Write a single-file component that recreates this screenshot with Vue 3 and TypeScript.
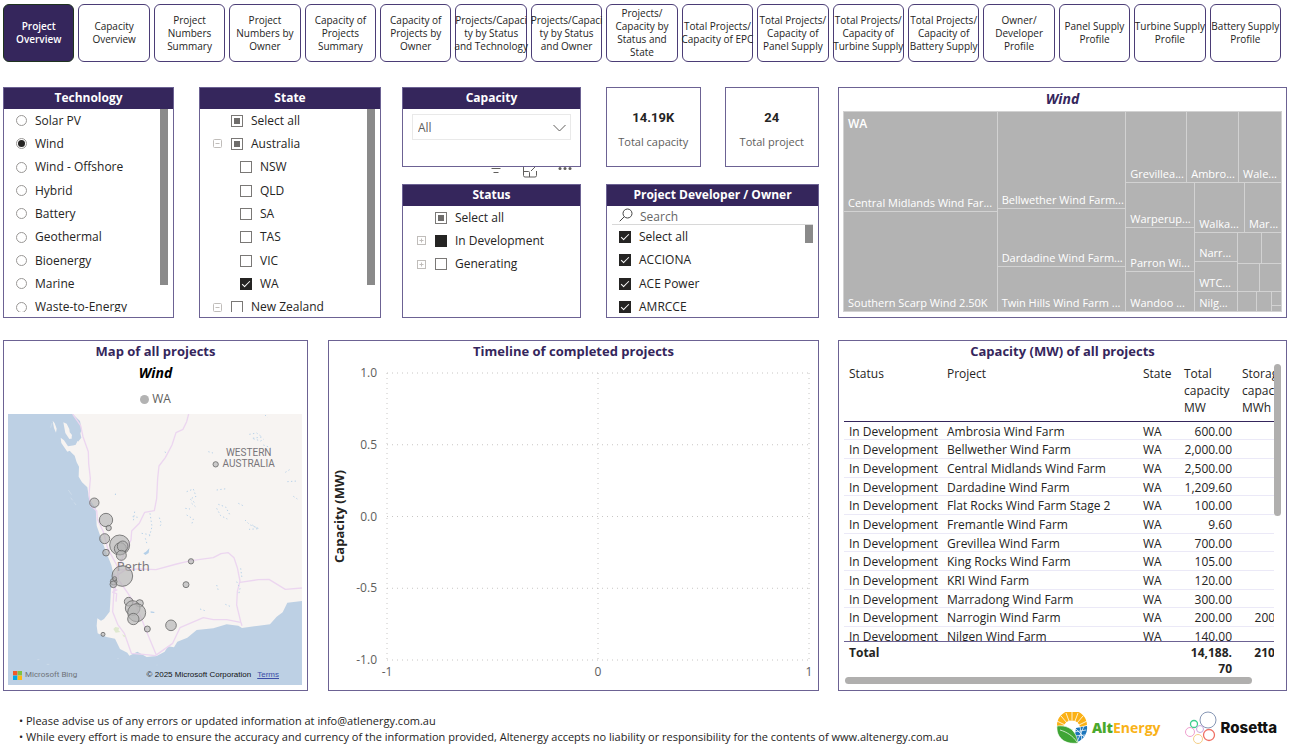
<script setup lang="ts">
import { ref } from 'vue'

const tabs: string[] = [
  'Project\nOverview',
  'Capacity\nOverview',
  'Project\nNumbers\nSummary',
  'Project\nNumbers by\nOwner',
  'Capacity of\nProjects\nSummary',
  'Capacity of\nProjects by\nOwner',
  'Projects/Capaci\nty by Status\nand Technology',
  'Projects/Capaci\nty by Status\nand Owner',
  'Projects/\nCapacity by\nStatus and\nState',
  'Total Projects/\nCapacity of EPC',
  'Total Projects/\nCapacity of\nPanel Supply',
  'Total Projects/\nCapacity of\nTurbine Supply',
  'Total Projects/\nCapacity of\nBattery Supply',
  'Owner/\nDeveloper\nProfile',
  'Panel Supply\nProfile',
  'Turbine Supply\nProfile',
  'Battery Supply\nProfile',
]
const activeTab = ref(0)

const technologies = ['Solar PV', 'Wind', 'Wind - Offshore', 'Hybrid', 'Battery', 'Geothermal', 'Bioenergy', 'Marine', 'Waste-to-Energy']
const technology = ref('Wind')

interface TreeRow {
  label: string
  level: number
  mark: 'none' | 'check' | 'some' | 'full'
  toggle?: 'minus' | 'plus'
}
const states: TreeRow[] = [
  { label: 'Select all', level: 0, mark: 'some' },
  { label: 'Australia', level: 0, mark: 'some', toggle: 'minus' },
  { label: 'NSW', level: 1, mark: 'none' },
  { label: 'QLD', level: 1, mark: 'none' },
  { label: 'SA', level: 1, mark: 'none' },
  { label: 'TAS', level: 1, mark: 'none' },
  { label: 'VIC', level: 1, mark: 'none' },
  { label: 'WA', level: 1, mark: 'check' },
  { label: 'New Zealand', level: 0, mark: 'none', toggle: 'minus' },
]
const statuses: TreeRow[] = [
  { label: 'Select all', level: 0, mark: 'some' },
  { label: 'In Development', level: 0, mark: 'full', toggle: 'plus' },
  { label: 'Generating', level: 0, mark: 'none', toggle: 'plus' },
]
const owners = ['Select all', 'ACCIONA', 'ACE Power', 'AMRCCE']

const kpis = [
  { value: '14.19K', label: 'Total capacity' },
  { value: '24', label: 'Total project' },
]

/* Treemap leaves: [label, x0, y0, x1, y1]; the edges become grid lines. */
type Leaf = [string, number, number, number, number]
const leaves: Leaf[] = [
  ['Central Midlands Wind Far...', 0, 0, 154, 100],
  ['Southern Scarp Wind 2.50K', 0, 100, 154, 200],
  ['Bellwether Wind Farm...', 154, 0, 283, 97],
  ['Dardadine Wind Farm...', 154, 97, 283, 155],
  ['Twin Hills Wind Farm ...', 154, 155, 283, 200],
  ['Grevillea...', 283, 0, 344, 71],
  ['Ambro...', 344, 0, 396, 71],
  ['Wale...', 396, 0, 439, 71],
  ['Warperup...', 283, 71, 352, 116],
  ['Parron Wi...', 283, 116, 352, 160],
  ['Wandoo ...', 283, 160, 352, 200],
  ['Walka...', 352, 71, 402, 121],
  ['Mar...', 402, 71, 439, 121],
  ['Narr...', 352, 121, 395, 150],
  ['WTC...', 352, 150, 395, 180],
  ['Nilg...', 352, 180, 395, 200],
  ['', 395, 121, 419, 152],
  ['', 419, 121, 439, 152],
  ['', 395, 152, 417, 180],
  ['', 417, 152, 439, 180],
  ['', 395, 180, 414, 200],
  ['', 414, 180, 429, 200],
  ['', 429, 180, 439, 194],
  ['', 429, 194, 439, 200],
]
const edges = (values: number[]) => [...new Set(values)].sort((a, b) => a - b)
const xs = edges(leaves.flatMap((l) => [l[1], l[3]]))
const ys = edges(leaves.flatMap((l) => [l[2], l[4]]))
const tracks = (e: number[]) => e.slice(1).map((v, i) => `minmax(0, ${v - e[i]}fr)`).join(' ')
const treemapStyle = { gridTemplateColumns: tracks(xs), gridTemplateRows: tracks(ys) }
const leafStyle = (l: Leaf) => ({
  gridColumn: `${xs.indexOf(l[1]) + 1} / ${xs.indexOf(l[3]) + 1}`,
  gridRow: `${ys.indexOf(l[2]) + 1} / ${ys.indexOf(l[4]) + 1}`,
})

/* Project bubbles: [cx, cy, r] in map units. */
const bubbles: [number, number, number][] = [
  [283, 503, 14], [318, 555, 20], [326, 579, 8], [314, 611, 15], [318, 653, 10],
  [359, 630, 30], [361, 641, 18], [368, 634, 16], [364, 661, 15], [367, 723, 31],
  [341, 740, 10], [340, 748, 10], [344, 731, 6], [573, 679, 8], [558, 749, 9], [386, 800, 13],
  [419, 805, 11], [398, 819, 22], [410, 833, 27], [400, 852, 17], [442, 882, 9],
  [513, 871, 16], [309, 898, 6], [647, 388, 8],
]
/* Salt lakes, drawn as dotted strokes. */
const lakes = [
  'M748 298l22-4 16 12-30 4 26 8 10 -6', 'M790 330l22 8', 'M856 412l16-10M862 440l30-2M880 484l12 8',
  'M560 470l20-8 8 22-18 8 18 14M575 505l16 14M556 520l14 2', 'M650 520l12 22 20 10M655 508l22 8 14 26',
  'M735 555l14 14 28 12-30 2M757 570l18 12', 'M715 505l16 8M650 465l30-4', 'M398 545l16 2M404 530l-4 28M450 535l6 40-8 30',
  'M478 548l6 18-6 12M425 595l24 4M436 610l6 20', 'M710 740l10 20-4 18M722 700l4 30', 'M650 750l6 20M600 822l18 6M676 808l14 6',
  'M560 540l20 12-6 20', 'M495 350l4 8M625 350l14 4M795 240l8 8',
]

const rows: [string, string, string][] = [
  ['Ambrosia Wind Farm', '600.00', ''],
  ['Bellwether Wind Farm', '2,000.00', ''],
  ['Central Midlands Wind Farm', '2,500.00', ''],
  ['Dardadine Wind Farm', '1,209.60', ''],
  ['Flat Rocks Wind Farm Stage 2', '100.00', ''],
  ['Fremantle Wind Farm', '9.60', ''],
  ['Grevillea Wind Farm', '700.00', ''],
  ['King Rocks Wind Farm', '105.00', ''],
  ['KRI Wind Farm', '120.00', ''],
  ['Marradong Wind Farm', '300.00', ''],
  ['Narrogin Wind Farm', '200.00', '200.00'],
  ['Nilgen Wind Farm', '140.00', ''],
]
const yTicks = ['1.0', '0.5', '0.0', '-0.5', '-1.0']
const xTicks = ['-1', '0', '1']
</script>

<template>
  <div class="page">
    <nav class="tabs" aria-label="Report pages">
      <button v-for="(tab, i) in tabs" :key="i" type="button" class="tab" :class="{ active: i === activeTab }" @click="activeTab = i">{{ tab }}</button>
    </nav>

    <main class="board">
      <div class="filters">
        <div class="pair">
          <section class="panel">
            <h2 class="bar">Technology</h2>
            <div class="scroller tall">
              <ul class="list nine">
                <li v-for="t in technologies" :key="t">
                  <label class="opt tech"><input v-model="technology" class="radio" type="radio" name="technology" :value="t" /><span>{{ t }}</span></label>
                </li>
              </ul>
              <span class="thumb long"></span>
            </div>
          </section>
          <section class="panel">
            <h2 class="bar">State</h2>
            <div class="scroller tall">
              <ul class="list nine">
                <li v-for="s in states" :key="s.label" class="node" :class="{ child: s.level === 1 }">
                  <button v-if="s.toggle" type="button" class="toggle" :aria-label="'Collapse ' + s.label">
                    <svg width="9" height="9" viewBox="0 0 9 9"><rect x=".5" y=".5" width="8" height="8" rx="1" /><path d="M2.500 4.500h4" /></svg>
                  </button>
                  <span v-else class="toggle"></span>
                  <label class="opt"><input class="check" :class="s.mark" type="checkbox" :checked="s.mark === 'check'" :indeterminate="s.mark === 'some'" /><span>{{ s.label }}</span></label>
                </li>
              </ul>
              <span class="thumb long"></span>
            </div>
          </section>
        </div>

        <div class="quad">
          <section class="panel top">
            <h2 class="bar">Capacity</h2>
            <div class="select-wrap">
              <select class="select" aria-label="Capacity">
                <option>All</option>
              </select>
              <svg class="chevron" width="13" height="8" viewBox="0 0 13 8"><path d="M.5 1l6 6 6-6" /></svg>
            </div>
          </section>

          <div class="kpis">
            <section v-for="k in kpis" :key="k.label" class="panel kpi">
              <strong>{{ k.value }}</strong>
              <span>{{ k.label }}</span>
            </section>
          </div>

          <section class="panel status">
            <div class="tools">
              <button type="button" aria-label="Filters"><svg width="12" height="11" viewBox="0 0 12 11"><path d="M1.500 1.500h9M3.500 5.500h5" /></svg></button>
              <button type="button" aria-label="Focus mode"><svg width="16" height="11" viewBox="0 0 16 11"><path d="M1.500 0v8.500a1.500 1.500 0 0 0 1.500 1.500h10a1.500 1.500 0 0 0 1.500-1.500V4M1.500 4.500h5a1 1 0 0 1 1 1V10M9 4l4-4" /></svg></button>
              <button type="button" aria-label="More options"><svg class="dots" width="14" height="11" viewBox="0 0 14 11"><circle cx="2" cy="1.500" r="1.500" /><circle cx="7" cy="1.500" r="1.500" /><circle cx="12" cy="1.500" r="1.500" /></svg></button>
            </div>
            <h2 class="bar">Status</h2>
            <ul class="list three">
              <li v-for="s in statuses" :key="s.label" class="node">
                <button v-if="s.toggle" type="button" class="toggle" :aria-label="'Expand ' + s.label">
                  <svg width="9" height="9" viewBox="0 0 9 9"><rect x=".5" y=".5" width="8" height="8" /><path d="M2.500 4.500h4M4.500 2.500v4" /></svg>
                </button>
                <span v-else class="toggle"></span>
                <label class="opt"><input class="check" :class="s.mark" type="checkbox" :checked="s.mark === 'full'" :indeterminate="s.mark === 'some'" /><span>{{ s.label }}</span></label>
              </li>
            </ul>
          </section>

          <section class="panel">
            <h2 class="bar">Project Developer / Owner</h2>
            <label class="search">
              <svg width="14" height="14" viewBox="0 0 14 14"><circle cx="8.500" cy="5.500" r="4.500" /><path d="M5.300 8.700L.7 13.300" /></svg>
              <input type="text" placeholder="Search" aria-label="Search owners" />
            </label>
            <div class="scroller short">
              <ul class="list four">
                <li v-for="o in owners" :key="o">
                  <label class="opt owner"><input class="check" type="checkbox" checked /><span>{{ o }}</span></label>
                </li>
              </ul>
              <span class="thumb small"></span>
            </div>
          </section>
        </div>
      </div>

      <section class="panel">
        <h2 class="heading italic">Wind</h2>
        <div class="treemap" :style="treemapStyle">
          <div v-for="(l, i) in leaves" :key="i" class="leaf" :style="leafStyle(l)">
            <span v-if="i === 0" class="group">WA</span>
            <span class="leaf-name">{{ l[0] }}</span>
          </div>
        </div>
      </section>

      <div class="visuals">
        <section class="panel column">
          <h2 class="heading">Map of all projects</h2>
          <h3 class="subtitle">Wind</h3>
          <p class="legend"><i></i>WA</p>
          <div class="map">
            <svg viewBox="24 237 882 813" preserveAspectRatio="xMidYMid slice">
              <rect x="24" y="237" width="882" height="813" fill="#bdd0e4" />
              <path
                class="land"
                d="M218 237L240 258 245 285 241 295 244 308 236 318 226 330 205 342 213 352 224 362 230 382 237 395 236 425 246 442 262 457 267 490 287 520 290 572 304 612 318 650 334 690 341 720 343 745 333 760 331 800 329 830 312 852 303 857 292 850 290 872 293 895 304 900 320 906 345 911 360 942 382 953 388 962 412 950 440 966 470 963 494 950 504 934 522 937 532 920 562 908 590 885 640 880 680 868 715 872 726 879 770 873 810 868 830 845 848 832 862 803 906 798V237z"
              />
              <path class="land" d="M158 257l6 8 6 16-2 12-6-14zM190 262l10 4 8 16 2 16 6 12-8 2-12-18zM182 308l10 8 12 18 24-4 4-12 6 6-6 14-30 12-18-26zM208 290l8 10-2 12-6-8z" />
              <g class="reef"><path d="M205 465l10 14M212 488l6 8M222 502l6 8M156 264l-4 14M112 974h6M140 988h8M352 970h4M470 990h2" /></g>
              <g class="road">
                <path d="M218 237L242 272 249 305 265 350 266 385 271 430 267 480 272 512 290 527 292 552 310 590 323 640 350 690 356 735 384 775 405 808 424 850 444 900 468 958" />
                <path d="M566 237L560 260 549 283 528 293 516 330 496 368 477 393 473 430 470 490 463 527 434 532 418 565 395 588 393 615 372 655 357 697" />
                <path d="M353 705L420 702 468 704 530 687 573 677 640 668 663 656 685 653 702 668 712 698 720 738 712 770 710 810 722 860 726 872" />
                <path d="M720 742L775 734 807 733 856 763 906 759" />
                <path d="M344 715L342 765 338 830 353 868 373 895 394 955 430 958 466 962 518 925 540 878 610 848 640 854 680 854 722 862" />
                <path d="M356 715L340 735 346 762 338 772 350 776 348 800M340 770l12-6M356 718l30-20" />
              </g>
              <g class="lakes"><path v-for="d in lakes" :key="d" :d="d" /></g>
              <path fill="#b4cfe8" d="M430 655l8-5 10-10-2 14-10 6zM452 829l12 2-2 3-10-1zM344 480l3-6 1 6z" />
              <path fill="#dfe9cf" d="M340 882l6-6 12 2-3 8 6 5-14 2zM366 898l12 5-6 4z" />
            </svg>
            <span class="place perth">Perth</span>
            <span class="place wa">WESTERN<br />AUSTRALIA</span>
            <svg viewBox="24 237 882 813" preserveAspectRatio="xMidYMid slice" class="bubbles">
              <circle v-for="(b, i) in bubbles" :key="i" :cx="b[0]" :cy="b[1]" :r="b[2]" />
            </svg>
            <div class="credits">
              <svg width="9" height="9" viewBox="0 0 9 9"><path fill="#f1592a" d="M0 0h4.400v4.400H0z" /><path fill="#80c342" d="M4.600 0H9v4.400H4.600z" /><path fill="#00a8e8" d="M0 4.600h4.400V9H0z" /><path fill="#fdb913" d="M4.600 4.600H9V9H4.600z" /></svg>
              <span class="bing">Microsoft Bing</span>
              <span class="copy">© 2025 Microsoft Corporation</span>
              <a href="#terms">Terms</a>
            </div>
          </div>
        </section>

        <section class="panel column">
          <h2 class="heading">Timeline of completed projects</h2>
          <div class="chart">
            <div class="axis-title"><span>Capacity (MW)</span></div>
            <div class="y-ticks"><span v-for="t in yTicks" :key="t">{{ t }}</span></div>
            <svg class="plot" width="100%" height="100%">
              <line v-for="(t, i) in yTicks" :key="t" x1="0" x2="100%" :y1="i * 25 + '%'" :y2="i * 25 + '%'" />
              <line v-for="(t, i) in xTicks" :key="'x' + t" y1="0" y2="100%" :x1="i * 50 + '%'" :x2="i * 50 + '%'" />
            </svg>
            <div class="x-ticks"><span v-for="t in xTicks" :key="t">{{ t }}</span></div>
          </div>
        </section>
      </div>

      <section class="panel column">
        <h2 class="heading">Capacity (MW) of all projects</h2>
        <div class="table-area">
          <div class="table-clip">
            <table>
              <thead>
                <tr>
                  <th scope="col">Status</th>
                  <th scope="col">Project</th>
                  <th scope="col">State</th>
                  <th scope="col">Total capacity MW</th>
                  <th scope="col">Storage capacity MWh</th>
                </tr>
              </thead>
              <tbody>
                <tr v-for="r in rows" :key="r[0]">
                  <td>In Development</td>
                  <td>{{ r[0] }}</td>
                  <td>WA</td>
                  <td class="num">{{ r[1] }}</td>
                  <td class="num">{{ r[2] }}</td>
                </tr>
              </tbody>
              <tfoot>
                <tr>
                  <td>Total</td>
                  <td></td>
                  <td></td>
                  <td class="num">14,188.<wbr />70</td>
                  <td class="num">210.00</td>
                </tr>
              </tfoot>
            </table>
          </div>
          <span class="vbar"></span>
        </div>
        <span class="hbar"></span>
      </section>
    </main>

    <footer class="foot">
      <ul>
        <li>• Please advise us of any errors or updated information at info@atlenergy.com.au</li>
        <li>• While every effort is made to ensure the accuracy and currency of the information provided, Altenergy accepts no liability or responsibility for the contents of www.altenergy.com.au</li>
      </ul>
      <div class="brand">
        <svg width="32" height="32" viewBox="0 0 32 32">
          <path fill="#fbb116" d="M1 14A15 15 0 0 1 31 13L24 15A8.500 8.500 0 0 0 8 13.500z" />
          <path stroke="#fff" stroke-width=".8" d="M1 9l8 4M5 4l6 7M10 1l3 8M16 0v8M22 1l-3 8M27 4l-6 7M31 9l-8 4" />
          <path fill="#1b75bb" d="M20 16l11-2a15 15 0 0 1-10 16l-3-1z" />
          <path stroke="#fff" stroke-width=".7" fill="none" d="M18 20l12-2M18 24l11-1M24 14l2 15M28 14l-7 16M20 17l9 9" />
          <path fill="#3fa535" stroke="#fff" stroke-width=".6" d="M1 14c9-1 19 2 21 17C8 33 0 25 1 14z" />
          <path stroke="#fff" stroke-width=".7" fill="none" d="M4 18c7 2 13 6 17 12" />
        </svg>
        <span class="alt-name"><b>Alt</b>Energy</span>
      </div>
      <div class="brand">
        <svg width="32" height="34" viewBox="0 0 32 34" fill="none" stroke-width="1">
          <circle cx="23" cy="9" r="8" stroke="#8797b5" />
          <circle cx="9" cy="13" r="3.500" stroke="#3ccf8e" stroke-width="1.300" />
          <circle cx="15" cy="18" r="3.500" stroke="#c9a6dc" />
          <circle cx="5" cy="21" r="4.500" stroke="#efa0cf" />
          <circle cx="24" cy="24" r="5.500" stroke="#ef6f63" stroke-width="1.300" />
          <circle cx="13" cy="28" r="4.500" stroke="#f5cf87" />
        </svg>
        <span class="rosetta-name">Rosetta</span>
      </div>
    </footer>
  </div>
</template>

<style>
body {
  margin: 0;
  background: #fff;
}
</style>

<style scoped>
.page {
  font-family: 'Open Sans', 'Noto Sans', sans-serif;
  font-size: 12px;
  line-height: 16px;
  color: #252423;
  padding: 4px 3px 0;
  box-sizing: border-box;
}
.page *,
.page *::before,
.page *::after {
  box-sizing: border-box;
}
h2,
h3,
p,
ul {
  margin: 0;
  padding: 0;
}
ul {
  list-style: none;
}
button {
  font-family: inherit;
  padding: 0;
  border: 0;
  background: none;
  color: inherit;
}
svg {
  display: block;
}

.tabs {
  display: grid;
  grid-template-columns: repeat(17, minmax(0, 1fr));
  gap: 4px;
  margin-right: 6px;
}
.tab {
  height: 58px;
  font-size: 10px;
  line-height: 13px;
  border: 1px solid #4b3d76;
  border-radius: 6px;
  background: #fff;
  white-space: pre;
  display: flex;
  align-items: center;
  justify-content: center;
  text-align: center;
}
.tab.active {
  background: #35265c;
  border-color: #1f3320;
  color: #fff;
  font-weight: 600;
}

.board {
  display: grid;
  grid-template-columns: 816fr 449fr;
  column-gap: 19px;
  row-gap: 22px;
  margin-top: 25px;
}
.filters {
  display: grid;
  grid-template-columns: 378fr 417fr;
  gap: 21px;
}
.pair {
  display: grid;
  grid-template-columns: 171fr 182fr;
  gap: 25px;
}
.quad {
  display: grid;
  grid-template-columns: 179fr 213fr;
  grid-template-rows: 80px 134px;
  gap: 17px 25px;
}
.visuals {
  display: grid;
  grid-template-columns: 305fr 491fr;
  gap: 20px;
}
.panel {
  border: 1px solid #6c6293;
  background: #fff;
  min-width: 0;
}
.column {
  display: flex;
  flex-direction: column;
  height: 351px;
}
.bar,
.heading {
  height: 21px;
  line-height: 19px;
  font-weight: 700;
  text-align: center;
}
.bar {
  background: #35265c;
  color: #fff;
  font-size: 12px;
}
.heading {
  line-height: 21px;
  color: #35265c;
  font-size: 13px;
  flex: none;
}
.italic {
  font-size: 14px;
  font-style: italic;
}

.scroller {
  display: flex;
  justify-content: space-between;
  overflow: hidden;
  margin-right: 5px;
}
.tall {
  height: 203px;
}
.short {
  height: 91px;
}
.thumb {
  width: 8px;
  background: #8a8a8a;
}
.long {
  height: 176px;
}
.small {
  height: 18px;
}
.list {
  display: grid;
  grid-auto-rows: 1fr;
}
.nine {
  height: 210px;
}
.three {
  height: 70px;
  padding-left: 14px;
}
.four {
  height: 94px;
}
.opt {
  display: flex;
  align-items: center;
  gap: 8px;
  height: 100%;
  white-space: nowrap;
}
.tech {
  padding-left: 12px;
}
.owner {
  padding-left: 12px;
}
.node {
  display: flex;
  align-items: center;
  gap: 9px;
}
.pair .node {
  padding-left: 13px;
}
.pair .node.child {
  padding-left: 22px;
}
.toggle {
  width: 9px;
  height: 9px;
}
.toggle svg {
  fill: none;
  stroke: #c0bdba;
}
.radio,
.check {
  appearance: none;
  margin: 0;
  flex: none;
  display: grid;
  place-items: center;
  background: #fff;
}
.radio {
  width: 11px;
  height: 11px;
  border: 1px solid #9a9896;
  border-radius: 50%;
}
.radio:checked::after {
  content: '';
  width: 7px;
  height: 7px;
  border-radius: 50%;
  background: #252423;
}
.check {
  width: 12px;
  height: 12px;
  border: 1px solid #7a7876;
}
.check.some::after {
  content: '';
  width: 6px;
  height: 6px;
  background: #6f6d6b;
}
.check:checked {
  background: #252423;
  border-color: #252423;
}
.check:checked:not(.full)::after {
  content: '';
  width: 8px;
  height: 4px;
  margin-bottom: 2px;
  border: solid #fff;
  border-width: 0 0 1px 1px;
  rotate: -45deg;
}

.top {
  z-index: 1;
}
.select-wrap {
  position: relative;
  margin: 5px 9px 0;
}
.select {
  appearance: none;
  width: 100%;
  height: 26px;
  padding: 0 5px;
  border: 1px solid #e9e9e9;
  border-radius: 0;
  background: #fff;
  color: #605e5c;
  font-family: inherit;
  font-size: 12px;
}
.chevron {
  position: absolute;
  right: 5px;
  top: 10px;
  fill: none;
  stroke: #605e5c;
  pointer-events: none;
}
.kpis {
  display: grid;
  grid-template-columns: 1fr 1fr;
  gap: 24px;
}
.kpi {
  display: flex;
  flex-direction: column;
  align-items: center;
  gap: 8px;
  padding-top: 22px;
  white-space: nowrap;
}
.kpi strong {
  font-family: Roboto, sans-serif;
  font-size: 13px;
}
.kpi span {
  font-size: 11px;
  color: #605e5c;
}
.status {
  position: relative;
}
.tools {
  position: absolute;
  right: 8px;
  top: -18px;
  display: flex;
  gap: 20px;
}
.tools svg {
  fill: none;
  stroke: #605e5c;
}
.tools .dots {
  fill: #605e5c;
  stroke: none;
}
.search {
  display: flex;
  align-items: center;
  gap: 7px;
  height: 19px;
  margin: 0 5px;
  padding-left: 7px;
  border-bottom: 1px solid #d8d8d8;
}
.search svg {
  flex: none;
  fill: none;
  stroke: #444;
}
.search input {
  min-width: 0;
  flex: 1;
  height: 18px;
  padding: 2px 0 0;
  border: 0;
  outline: 0;
  background: none;
  font-family: inherit;
  font-size: 12px;
}
.search input::placeholder {
  color: #666;
}

.treemap {
  display: grid;
  height: 201px;
  margin: 2px 4px 0;
  border: solid #d2d2d2;
  border-width: 1px 0 0 1px;
}
.leaf {
  display: flex;
  flex-direction: column;
  justify-content: flex-end;
  padding: 0 4px;
  background: #b3b3b3;
  border: solid #d2d2d2;
  border-width: 0 1px 1px 0;
  color: #fff;
  font-size: 11px;
  overflow: hidden;
  white-space: nowrap;
}
.group {
  margin: 4px 0 auto;
  font-size: 12px;
  font-weight: 600;
}
.leaf-name:empty {
  display: none;
}

.subtitle {
  font-size: 14px;
  line-height: 22px;
  font-style: italic;
  color: #000;
  text-align: center;
}
.legend {
  display: flex;
  align-items: center;
  justify-content: center;
  gap: 3px;
  height: 30px;
  color: #605e5c;
}
.legend i {
  width: 9px;
  height: 9px;
  border-radius: 50%;
  background: #b3b3b3;
}
.map {
  position: relative;
  flex: 1;
  margin: 0 5px 5px 4px;
  overflow: hidden;
}
.map > svg {
  position: absolute;
  inset: 0;
  width: 100%;
  height: 100%;
}
.land {
  fill: #f7f4f2;
}
.road path {
  fill: none;
  stroke: #ecd6f0;
  stroke-width: 4;
  stroke-linejoin: round;
}
.reef path {
  fill: none;
  stroke: #d3e0ec;
  stroke-width: 2;
}
.lakes path {
  fill: none;
  stroke: #b9d3ea;
  stroke-width: 3;
  stroke-dasharray: 4 7;
}
.bubbles circle {
  fill: #b3b3b3;
  fill-opacity: 0.65;
  stroke: #6a6a6a;
  stroke-width: 2.5;
}
.place {
  position: absolute;
  color: #77757a;
}
.perth {
  left: 37%;
  top: 53%;
  font-size: 13px;
}
.wa {
  left: 73%;
  top: 12%;
  font-family: Roboto, sans-serif;
  font-size: 10px;
  line-height: 11px;
  text-align: center;
}
.credits {
  position: absolute;
  inset: auto 23px 4px 5px;
  display: flex;
  align-items: center;
  gap: 3px;
  font-size: 8px;
  line-height: 12px;
  white-space: nowrap;
}
.bing {
  font-family: Roboto, sans-serif;
  color: #6e7278;
}
.copy,
.credits a {
  font-family: 'Liberation Sans', Arial, sans-serif;
  color: #111;
}
.copy {
  margin-left: auto;
}
.credits a {
  margin-left: 3px;
  color: #3b4ea8;
}

.chart {
  flex: 1;
  display: grid;
  grid-template-columns: 18px 26px 1fr;
  grid-template-rows: 1fr 20px;
  column-gap: 7px;
  padding: 11px 9px 10px 0;
  color: #605e5c;
}
.axis-title {
  display: flex;
  align-items: center;
  justify-content: flex-end;
}
.axis-title span {
  writing-mode: vertical-rl;
  rotate: 180deg;
  font-size: 13px;
  font-weight: 700;
  color: #252423;
}
.y-ticks {
  display: flex;
  flex-direction: column;
  justify-content: space-between;
  margin: -8px 0;
  padding-right: 3px;
  text-align: right;
  white-space: nowrap;
}
.plot {
  overflow: visible;
}
.plot line {
  stroke: #c8c6c4;
  stroke-dasharray: 1 4;
}
.x-ticks {
  grid-column: 3;
  display: flex;
  justify-content: space-between;
  padding-top: 4px;
  margin: 0 -8px;
}
.x-ticks span {
  width: 16px;
  text-align: center;
}

.table-area {
  display: flex;
  justify-content: space-between;
  margin: 0 5px;
  height: 314px;
}
.table-clip {
  flex: 1;
  overflow: hidden;
}
.vbar,
.hbar {
  background: #b0afae;
  border-radius: 4px;
}
.vbar {
  width: 7px;
  height: 152px;
  margin-top: 2px;
}
.hbar {
  width: 91%;
  height: 7px;
  margin: 1px 0 0 6px;
}
table,
thead,
tfoot,
tbody {
  display: block;
}
tr {
  display: grid;
  grid-template-columns: 98px 196px 41px 58px 60px;
  width: 453px;
}
th,
td {
  padding: 0 5px;
  text-align: left;
  font-weight: 400;
}
td {
  white-space: nowrap;
}
.num {
  text-align: right;
}
thead tr {
  height: 60px;
  padding-top: 3px;
  line-height: 17px;
  border-bottom: 1px solid #35265c;
}
tbody {
  height: 220px;
  overflow: hidden;
  border-bottom: 1px solid #6c6293;
}
tbody tr {
  height: 19px;
  line-height: 20px;
  border-bottom: 1px solid #ebe9f7;
}
tbody tr:nth-child(3n + 1) {
  height: 18px;
}
tfoot td {
  font-weight: 700;
  padding-top: 3px;
  white-space: normal;
}

.foot {
  display: flex;
  align-items: center;
  gap: 24px;
  margin: 20px 10px 0 16px;
  font-size: 11px;
}
.foot ul {
  flex: 1;
  padding-top: 2px;
  white-space: nowrap;
}
.brand {
  display: flex;
  align-items: center;
  gap: 4px;
}
.alt-name {
  font-size: 14px;
  font-weight: 700;
  color: #f9b218;
}
.alt-name b {
  color: #4aa82c;
}
.rosetta-name {
  font-family: Inter, sans-serif;
  font-size: 15px;
  font-weight: 800;
  color: #111;
}
</style>
